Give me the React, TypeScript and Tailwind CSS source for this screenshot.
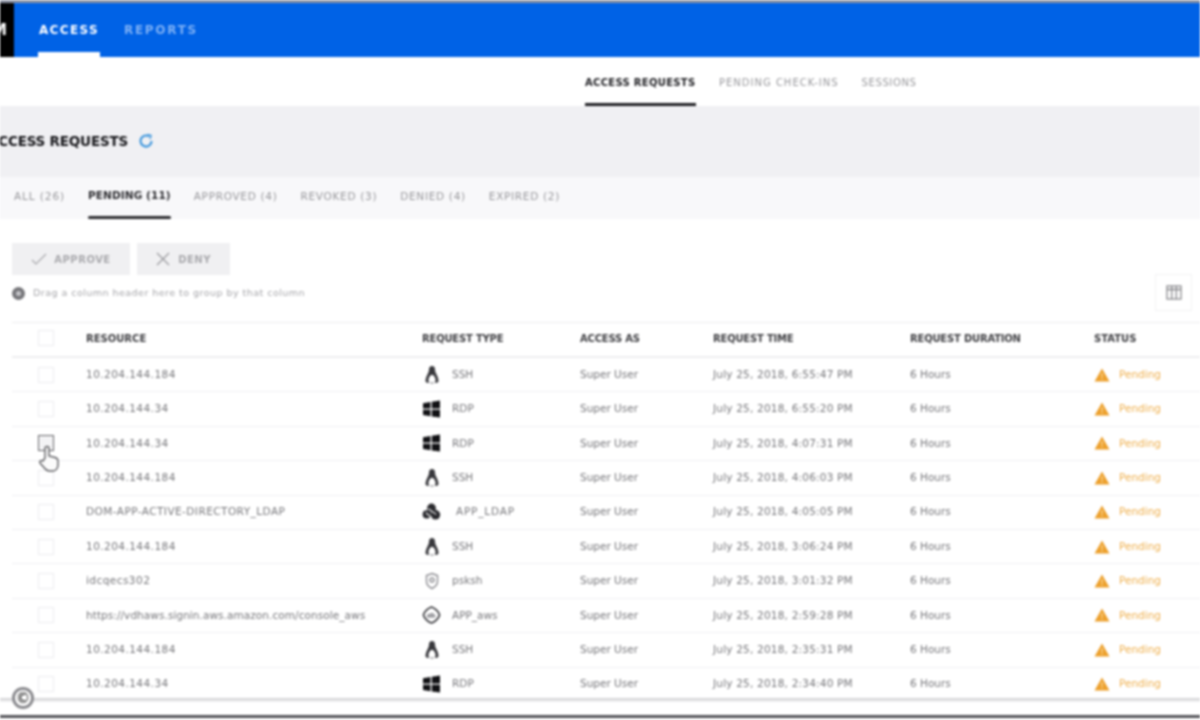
import React from "react";

const Linux = () => (
  <svg width="16" height="20" viewBox="0 0 16 20" fill="none">
    <path d="M8 1c-2 0-3 1.500-3 3.500 0 2-.6 3-1.600 5C2.300 11.700 1.500 14 1.500 16c0 1 1 1.500 2 2l2-.8c-.8-.6-1.300-1.600-1-3 .4-2 1.800-4.500 3.500-4.500s3.100 2.500 3.500 4.500c.3 1.400-.2 2.400-1 3l2 .8c1-.5 2-1 2-2 0-2-.8-4.300-1.900-6.500-1-2-1.600-3-1.600-5C11 2.500 10 1 8 1z" fill="#38383c" />
    <path d="M6.500 18h3" stroke="#9a9a9e" strokeWidth="1.500" />
  </svg>
);

const Win = () => (
  <svg width="19" height="18" viewBox="0 0 19 18" fill="#111114">
    <path d="M1 3.200 8.500 2v6.500H1zM9.800 1.800 18 .6v7.900H9.800zM1 9.800h7.500v6.400L1 15zM9.800 9.800H18v7.700l-8.200-1.100z" />
  </svg>
);

const Ldap = () => (
  <svg width="25" height="22" viewBox="0 0 24 22" fill="#2a2a2e">
    <circle cx="12" cy="6" r="5.600" />
    <circle cx="6" cy="14" r="5.200" />
    <circle cx="17" cy="14.500" r="6" />
    <path d="M8 7 18 14M5 12l8 7" stroke="#f5f5f5" strokeWidth="1.500" />
  </svg>
);

const Shield = () => (
  <svg width="14" height="18" viewBox="0 0 14 18" fill="none" stroke="#8d8d92" strokeWidth="1.400">
    <path d="M7 1.500 12.500 3.500v6c0 3.200-2.500 5.500-5.500 7-3-1.500-5.500-3.800-5.500-7v-6z" />
    <circle cx="7" cy="8" r="2" />
  </svg>
);

const Aws = () => (
  <svg width="20" height="20" viewBox="0 0 20 20" fill="none" stroke="#3a3a3e" strokeWidth="1.700">
    <path d="M10 1.500 C13 2.500 17.500 6 18.500 10 C17.500 14 13 17.500 10 18.500 C7 17.500 2.500 14 1.500 10 C2.500 6 7 2.500 10 1.500z" />
    <path d="M5.500 12.500c-1.500-2.500 1-4.500 3-3.800 1-1.700 3.800-1.200 4.300.8 1.700 0 2.200 2.400.5 3-2.500.6-5.500.6-7.800 0z" fill="#a0a0a4" stroke="none" />
  </svg>
);

const Warn = () => (
  <svg width="16" height="14" viewBox="0 0 16 14" fill="#eda02c">
    <path d="M8 .5 15.500 13.500H.5z" />
    <rect x="7.400" y="5" width="1.200" height="4.500" fill="#f8d9a0" />
    <rect x="7.400" y="10.300" width="1.200" height="1.400" fill="#f8d9a0" />
  </svg>
);

type Row = { res: string; icon: React.ReactNode; type: string; time: string; cb?: boolean };
const rows: Row[] = [
  { res: "10.204.144.184", icon: <Linux />, type: "SSH", time: "July 25, 2018, 6:55:47 PM" },
  { res: "10.204.144.34", icon: <Win />, type: "RDP", time: "July 25, 2018, 6:55:20 PM" },
  { res: "10.204.144.34", icon: <Win />, type: "RDP", time: "July 25, 2018, 4:07:31 PM", cb: true },
  { res: "10.204.144.184", icon: <Linux />, type: "SSH", time: "July 25, 2018, 4:06:03 PM" },
  { res: "DOM-APP-ACTIVE-DIRECTORY_LDAP", icon: <Ldap />, type: "APP_LDAP", time: "July 25, 2018, 4:05:05 PM" },
  { res: "10.204.144.184", icon: <Linux />, type: "SSH", time: "July 25, 2018, 3:06:24 PM" },
  { res: "idcqecs302", icon: <Shield />, type: "psksh", time: "July 25, 2018, 3:01:32 PM" },
  { res: "https://vdhaws.signin.aws.amazon.com/console_aws", icon: <Aws />, type: "APP_aws", time: "July 25, 2018, 2:59:28 PM" },
  { res: "10.204.144.184", icon: <Linux />, type: "SSH", time: "July 25, 2018, 2:35:31 PM" },
  { res: "10.204.144.34", icon: <Win />, type: "RDP", time: "July 25, 2018, 2:34:40 PM" },
];

const cols = "grid grid-cols-[74px_336px_158px_133px_197px_184px_1fr] items-center";

export default function App() {
  return (
    <div className="relative h-[720px] w-[1200px] overflow-hidden bg-white font-['DejaVu_Sans','Liberation_Sans',sans-serif] blur-[0.9px]">
      <div className="h-[3px] bg-[#8d93a3]" />
      <header className="flex h-[54px] items-stretch bg-[#0062e6]">
        <div className="flex w-[14px] items-center overflow-hidden bg-black">
          <span className="ml-[-8px] shrink-0 text-[15px] font-bold leading-none text-white">M</span>
        </div>
        <nav className="ml-[24px] flex gap-[24px]">
          <div className="flex w-[62px] flex-col items-center justify-between pt-[19px]">
            <span className="block whitespace-nowrap text-[12px] font-bold leading-[16px] tracking-[1.400px] text-white">ACCESS</span>
            <span className="h-[5px] w-[62px] bg-white" />
          </div>
          <div className="pt-[19px]">
            <span className="block whitespace-nowrap text-[12px] font-bold leading-[16px] tracking-[1.700px] text-[#7db0f5]">REPORTS</span>
          </div>
        </nav>
      </header>

      <div className="ml-[585px] flex h-[49px] gap-[23px] text-[10px]">
        <div className="flex w-[111px] flex-col justify-between pt-[18px]">
          <span className="whitespace-nowrap font-bold leading-[16px] tracking-[0.3px] text-[#1f1f23]">ACCESS REQUESTS</span>
          <span className="h-[3px] w-full bg-[#1f1f23]" />
        </div>
        <div className="whitespace-nowrap pt-[18px] leading-[16px] tracking-[1px] text-[#97979b]">PENDING CHECK-INS</div>
        <div className="whitespace-nowrap pt-[18px] leading-[16px] tracking-[0.6px] text-[#97979b]">SESSIONS</div>
      </div>

      <div className="flex h-[71px] items-center bg-[#f0f0f3] pb-[1px]">
        <h1 className="ml-[-12px] whitespace-nowrap text-[13.500px] font-bold tracking-[-0.2px] text-[#17171b]">ACCESS REQUESTS</h1>
        <svg className="ml-[10px]" width="16" height="16" viewBox="0 0 16 16" fill="none" stroke="#3f97dd" strokeWidth="2.200">
          <path d="M13.500 8A5.500 5.500 0 1 1 11 3.400" />
          <path d="M9.500 1.500 13 2.500 12 6" strokeWidth="1.500" />
        </svg>
      </div>

      <div className="flex h-[42px] items-stretch gap-[23px] bg-[#f8f8fa] pl-[14px] text-[10.500px] tracking-[0.7px] text-[#97979b]">
        <span className="whitespace-nowrap pt-[11px] leading-[16px] tracking-[0.9px]">ALL (26)</span>
        <div className="flex flex-col justify-between pt-[10px]">
          <span className="whitespace-nowrap font-bold leading-[16px] tracking-[0.1px] text-[#2c2c30]">PENDING (11)</span>
          <span className="h-[3px] w-full rounded-sm bg-[#2c2c30]" />
        </div>
        <span className="whitespace-nowrap pt-[11px] leading-[16px]">APPROVED (4)</span>
        <span className="whitespace-nowrap pt-[11px] leading-[16px]">REVOKED (3)</span>
        <span className="whitespace-nowrap pt-[11px] leading-[16px]">DENIED (4)</span>
        <span className="whitespace-nowrap pt-[11px] leading-[16px]">EXPIRED (2)</span>
      </div>

      <div className="ml-[12px] mt-[24px] flex gap-[7px] text-[10px] font-bold tracking-[0.5px] text-[#a9a9ad]">
        <div className="flex h-[32px] w-[118px] items-center justify-center gap-[7px] bg-[#f0f0f2]">
          <svg width="16" height="12" viewBox="0 0 16 12" fill="none" stroke="#a9a9ad" strokeWidth="1.200"><path d="M1 7l4 4L15 1" /></svg>
          <span>APPROVE</span>
        </div>
        <div className="flex h-[32px] w-[93px] items-center justify-center gap-[8px] bg-[#f0f0f2]">
          <svg width="14" height="14" viewBox="0 0 14 14" fill="none" stroke="#9a9a9e" strokeWidth="1.200"><path d="M1 1l12 12M13 1 1 13" /></svg>
          <span>DENY</span>
        </div>
      </div>

      <div className="relative ml-[12px] mt-[8px] flex h-[20px] items-center gap-[8px] text-[9.500px] tracking-[0.47px] text-[#a6a6aa]">
        <span className="flex h-[13px] w-[13px] items-center justify-center rounded-full bg-[#77777b]">
          <span className="h-[5px] w-[5px] rounded-full bg-[#c4c4c8]" />
        </span>
        <span className="whitespace-nowrap">Drag a column header here to group by that column</span>
        <div className="absolute right-[8px] top-[-9px] flex h-[37px] w-[37px] items-center justify-center border border-[#f2f2f4]">
          <svg width="16" height="15" viewBox="0 0 16 15" fill="none" stroke="#8a8a8e" strokeWidth="1.300">
            <rect x="1" y="1" width="14" height="13" />
            <path d="M1 4.500h14M5.700 1v13M10.300 1v13" />
          </svg>
        </div>
      </div>

      <div className="ml-[12px] mt-[19px] border-t border-[#ececee] text-[10px]">
        <div className={`${cols} h-[35px] border-b-2 border-[#eeeef0] pb-[3px] font-bold text-[#3f3f43]`}>
          <span className="ml-[26px] h-[16px] w-[16px] border border-[#ededef]" />
          <span>RESOURCE</span>
          <span className="tracking-[-0.2px]">REQUEST TYPE</span>
          <span className="tracking-[-0.2px]">ACCESS AS</span>
          <span className="tracking-[-0.2px]">REQUEST TIME</span>
          <span className="tracking-[-0.2px]">REQUEST DURATION</span>
          <span>STATUS</span>
        </div>
        {rows.map((r, i) => (
          <div key={i} className={`${cols} h-[34.400px] border-b border-[#f0f0f2] text-[10.500px] text-[#77777b]`}>
            <span className={`ml-[26px] h-[16px] w-[16px] border ${r.cb ? "border-[#66666a] bg-[#f3f3f5]" : "border-[#ededef]"}`} />
            <span className={`whitespace-nowrap ${r.res.startsWith("http") ? "tracking-[0.06px]" : "tracking-[0.45px]"}`}>{r.res}</span>
            <span className="flex items-center">
              <span className="flex w-[19px] justify-center">{r.icon}</span>
              <span className={r.type === "APP_LDAP" ? "ml-[15px] tracking-[0.8px]" : "ml-[11px]"}>{r.type}</span>
            </span>
            <span>Super User</span>
            <span className="whitespace-nowrap tracking-[0.2px]">{r.time}</span>
            <span>6 Hours</span>
            <span className="flex items-center gap-[9px] text-[#efb04f]">
              <Warn />
              <span>Pending</span>
            </span>
          </div>
        ))}
      </div>

      <div className="absolute inset-x-0 bottom-[18px] h-[4px] bg-gradient-to-b from-[#cfcfd2] to-[#f5f5f6]" />
      <div className="absolute inset-x-0 bottom-[2px] h-[3px] bg-[#55555a]" />

      <svg className="absolute left-[37px] top-[445px]" width="24" height="28" viewBox="0 0 24 28" fill="#fbfbfb" stroke="#606064" strokeWidth="1.400">
        <path d="M8 13V3.500a2 2 0 0 1 4 0V11l6 1.500c2 .5 3 1.500 3 3.500v4c0 3-2 6-5 6h-4c-2.500 0-3.500-1.500-5-3.500L3 18c-1-1.500 1-3.500 3-2z" />
      </svg>

      <div className="absolute bottom-[11px] left-[12px] flex h-[22px] w-[22px] items-center justify-center rounded-full bg-[#8a8a8e]">
        <span className="flex h-[16px] w-[16px] items-center justify-center rounded-full bg-white text-[14px] leading-none text-black">©</span>
      </div>
    </div>
  );
}
